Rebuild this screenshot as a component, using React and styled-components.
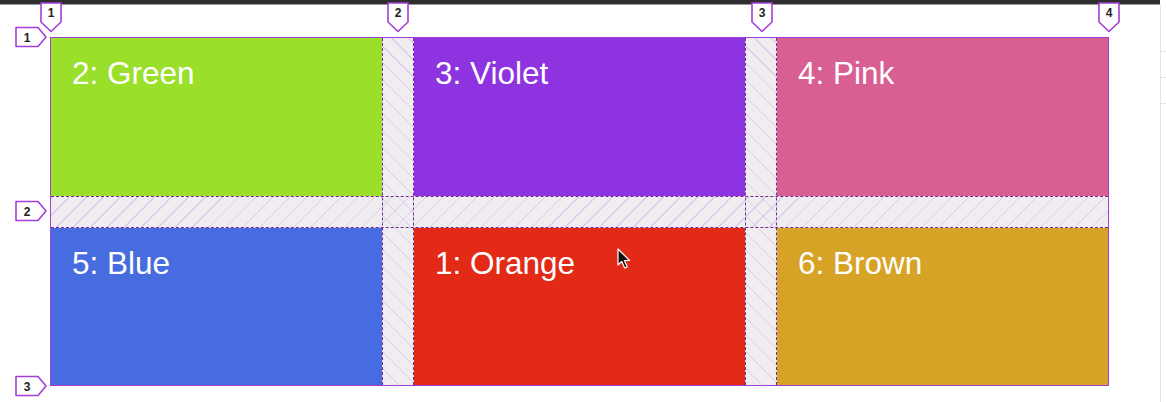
import React from 'react';
import styled, { createGlobalStyle } from 'styled-components';

const GlobalStyle = createGlobalStyle`
html, body {
  margin: 0;
  padding: 0;
  background: #ffffff;
}
body {
  font-family: "Liberation Sans", Arial, sans-serif;
  width: 1166px;
  height: 402px;
  overflow: hidden;
}
`

const Page = styled.div`
display: flex;
flex-direction: column;
width: 1166px;
height: 402px;
`

const TopBar = styled.div`
height: 5px;
margin-right: 6px;
background: #2e2e2e;
border-bottom: 1px solid #9a9a9a;
box-sizing: border-box;
`

const Body = styled.div`
display: flex;
flex: 1;
`

const Stage = styled.div`
flex: 1;
padding: 32px 0 0 50px;
`

const SidePanel = styled.div`
width: 5px;
border-left: 1px solid #e4e4e4;
display: flex;
flex-direction: column;
padding-top: 46px;
gap: 25px;
`

const SideRule = styled.div`
height: 1px;
background: #e2e2e2;
`

const GridWrap = styled.div`
position: relative;
width: 1059px;
height: 349px;
`

const Grid = styled.div`
display: grid;
grid-template-columns: repeat(3, 1fr);
grid-template-rows: repeat(2, 1fr);
gap: 32px;
width: 100%;
height: 100%;
box-sizing: border-box;
border: 1px solid #a33fd6;
background: #efedf0;
`

const Cell = styled.div`
background: ${p => p.$color};
color: #ffffff;
font-size: 31.5px;
padding: 17px 21px;
`

const Overlay = styled.div`
position: absolute;
inset: 1px;
display: grid;
grid-template-columns: 1fr 32px 1fr 32px 1fr;
grid-template-rows: 1fr 32px 1fr;
pointer-events: none;
`

const ColGap = styled.div`
grid-column: ${p => p.$col};
grid-row: 1 / -1;
border-left: 1px dashed #6f2c8f;
border-right: 1px dashed #6f2c8f;
box-sizing: border-box;
background: repeating-linear-gradient(45deg, transparent 0 11px, rgba(205, 160, 232, 0.45) 11px 12px);
`

const RowGap = styled.div`
grid-column: 1 / -1;
grid-row: 2;
border-top: 1px dashed #6f2c8f;
border-bottom: 1px dashed #6f2c8f;
box-sizing: border-box;
background: repeating-linear-gradient(-45deg, transparent 0 11px, rgba(205, 160, 232, 0.45) 11px 12px);
`

const Badge = styled.svg`
position: absolute;
left: ${p => p.$x}px;
top: ${p => p.$y}px;
overflow: visible;
`

const Cursor = styled.svg`
position: absolute;
left: 567px;
top: 211px;
`

const cells = [
  { label: '2: Green', color: '#9ae02b' },
  { label: '3: Violet', color: '#8e33e0' },
  { label: '4: Pink', color: '#d95f92' },
  { label: '5: Blue', color: '#476ce0' },
  { label: '1: Orange', color: '#e22a17' },
  { label: '6: Brown', color: '#d7a326' },
]

// grid line positions, relative to the grid box
const colLines = [1, 348, 712, 1059]
const rowLines = [0, 174, 349]

function ColLabel({ n, x }) {
  return (
    <Badge $x={x - 11} $y={-35} width="22" height="30">
      <polygon points="1,1 21,1 21,20 11,29.5 1,20" fill="#fff" stroke="#a33fd6" strokeWidth="1.6" strokeLinejoin="round" />
      <text x="11" y="15" textAnchor="middle" fontSize="12" fontWeight="600" fontFamily="Liberation Sans, Arial, sans-serif" fill="#222">{n}</text>
    </Badge>
  )
}

function RowLabel({ n, y }) {
  return (
    <Badge $x={-35} $y={y - 10} width="32" height="20">
      <polygon points="1,0.5 23,0.5 31,10 23,19.5 1,19.5" fill="#fff" stroke="#a33fd6" strokeWidth="1.6" strokeLinejoin="round" />
      <text x="12" y="14.5" textAnchor="middle" fontSize="12" fontWeight="600" fontFamily="Liberation Sans, Arial, sans-serif" fill="#222">{n}</text>
    </Badge>
  )
}

export default function App() {
  return (
    <>
      <GlobalStyle />
      <Page>
        <TopBar />
        <Body>
          <Stage>
            <GridWrap>
              <Grid>
                {cells.map(c => (
                  <Cell key={c.label} $color={c.color}>{c.label}</Cell>
                ))}
              </Grid>
              <Overlay>
                <ColGap $col={2} />
                <ColGap $col={4} />
                <RowGap />
              </Overlay>
              {colLines.map((x, i) => <ColLabel key={'c' + i} n={i + 1} x={x} />)}
              {rowLines.map((y, i) => <RowLabel key={'r' + i} n={i + 1} y={y} />)}
              <Cursor width="14" height="22" viewBox="0 0 14 22">
                <path d="M1 1 L1 17 L4.8 13.4 L7.6 20 L10.2 18.9 L7.5 12.5 L12.6 12.5 Z" fill="#111" stroke="#fff" strokeWidth="1.2" strokeLinejoin="round" />
              </Cursor>
            </GridWrap>
          </Stage>
          <SidePanel>
            <SideRule />
            <SideRule />
            <SideRule />
          </SidePanel>
        </Body>
      </Page>
    </>
  )
}
